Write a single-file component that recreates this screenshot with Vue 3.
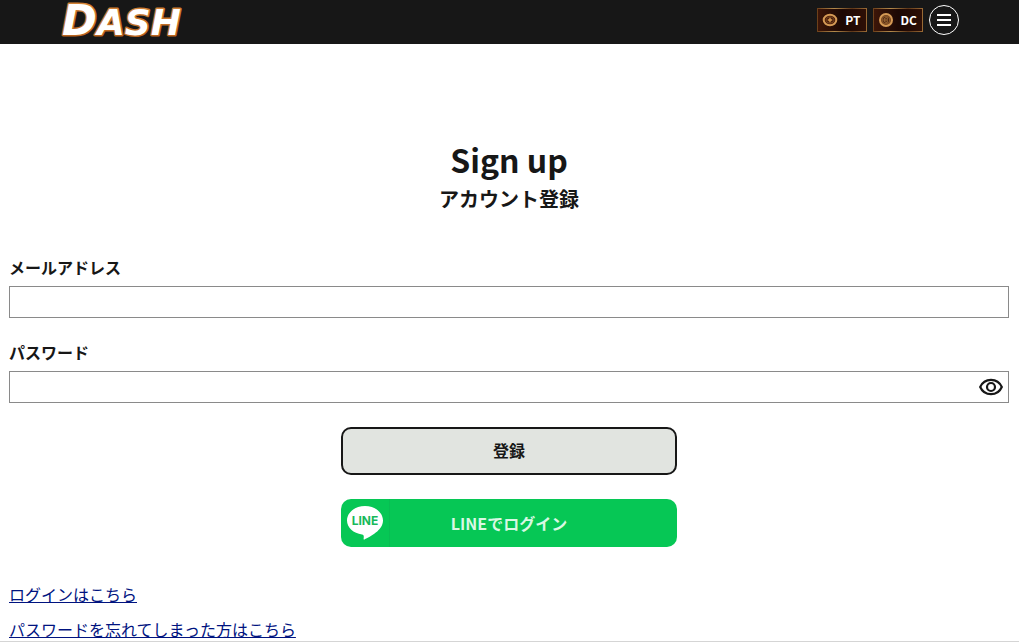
<script setup>
import { ref } from 'vue'

const email = ref('')
const password = ref('')
const visible = ref(false)
const balances = [
  { label: 'PT', glyph: 'star' },
  { label: 'DC', glyph: 'coin' },
]
</script>

<template>
  <div class="page">
    <header class="bar">
      <a class="logo" href="#" aria-label="Dash">
        <svg width="136" height="40" viewBox="0 0 136 40">
          <defs>
            <linearGradient id="edge" x1="0" y1="0" x2="0" y2="1">
              <stop offset="0" stop-color="#d88a3c" />
              <stop offset="1" stop-color="#b35c18" />
            </linearGradient>
          </defs>
          <text class="word" x="4" y="35"><tspan class="cap">D</tspan><tspan class="rest">ASH</tspan></text>
        </svg>
      </a>
      <nav class="tools">
        <a v-for="b in balances" :key="b.label" class="chip" href="#">
          <svg width="16" height="16" viewBox="0 0 16 16" aria-hidden="true">
            <template v-if="b.glyph === 'star'">
              <ellipse cx="8" cy="8" rx="6.3" ry="5.3" fill="#4a1e0c" stroke="#d59a55" stroke-width="2" />
              <ellipse cx="8" cy="8" rx="4" ry="3.2" fill="none" stroke="#75401c" />
              <path d="M8 5.800v4.400M5.800 8h4.400" stroke="#d89b50" stroke-width="1.4" />
            </template>
            <template v-else>
              <circle cx="8" cy="8" r="6" fill="#74431f" stroke="#d59a55" stroke-width="2" />
              <circle cx="8" cy="8" r="3.8" fill="#482411" stroke="#8f5a2a" />
              <path d="M10 6.300C8.500 5 6 6 6 8s2.500 3 4 1.700M7 8h3" fill="none" stroke="#b77b3c" stroke-width="1" />
            </template>
          </svg>
          <span>{{ b.label }}</span>
        </a>
        <button class="menu" type="button" aria-label="メニュー">
          <svg width="14" height="12" viewBox="0 0 14 12" aria-hidden="true">
            <path d="M0 1h14M0 6h14M0 11h14" stroke="#fff" stroke-width="2" />
          </svg>
        </button>
      </nav>
    </header>

    <main class="content">
      <h1 class="title">Sign up</h1>
      <p class="subtitle">アカウント登録</p>

      <form class="form" @submit.prevent>
        <div class="fields">
          <div class="field">
            <label for="email">メールアドレス</label>
            <div class="box"><input id="email" v-model="email" type="email" /></div>
          </div>
          <div class="field">
            <label for="password">パスワード</label>
            <div class="box">
              <input id="password" v-model="password" :type="visible ? 'text' : 'password'" />
              <button class="eye" type="button" aria-label="パスワードを表示" @click="visible = !visible">
                <svg width="24" height="18" viewBox="0 0 24 18" aria-hidden="true">
                  <path d="M1.200 9C3.200 4.400 7.200 1.800 12 1.800S20.800 4.400 22.800 9C20.800 13.600 16.800 16.200 12 16.200S3.200 13.600 1.200 9Z" fill="none" stroke="#171717" stroke-width="2.200" />
                  <circle cx="12" cy="9" r="4" fill="none" stroke="#171717" stroke-width="2.200" />
                </svg>
              </button>
            </div>
          </div>
        </div>
        <button class="action submit" type="submit">登録</button>
        <button class="action line" type="button">
          <span class="mark">
            <svg width="38" height="36" viewBox="0 0 38 36" aria-hidden="true">
              <path d="M19 1C9 1 1 7.500 1 15.500c0 7 6.500 12.800 15 14 1.800.3 2 1.200 1.600 4.200-.1.800.3 1.100 1 .7C24 31.500 37 25.500 37 15.500 37 7.500 29 1 19 1Z" fill="#fff" />
              <text class="brand" x="19" y="20" text-anchor="middle">LINE</text>
            </svg>
          </span>
          <span class="caption">LINEでログイン</span>
        </button>
      </form>

      <ul class="links">
        <li><a href="#">ログインはこちら</a></li>
        <li><a href="#">パスワードを忘れてしまった方はこちら</a></li>
      </ul>
    </main>
    <footer class="foot"></footer>
  </div>
</template>

<style>
body {
  margin: 0;
  background: #fff;
}
</style>

<style scoped>
.page {
  color: #171717;
  font-family: "Noto Sans CJK JP", sans-serif;
  font-size: 16px;
  line-height: 24px;
}
.bar {
  box-sizing: border-box;
  display: flex;
  align-items: center;
  justify-content: space-between;
  height: 44px;
  padding: 0 60px 4px 58px;
  background: #171717;
}
.logo svg {
  display: block;
  overflow: visible;
}
.word {
  font-family: "DejaVu Sans", sans-serif;
  font-weight: 700;
  font-style: italic;
  fill: #fff;
  stroke: url(#edge);
  stroke-width: 3px;
  paint-order: stroke;
  stroke-linejoin: round;
}
.cap {
  font-size: 42px;
}
.rest {
  font-size: 36px;
}
.tools {
  display: flex;
  align-items: center;
  gap: 6px;
}
.chip {
  box-sizing: border-box;
  display: flex;
  align-items: center;
  gap: 7px;
  height: 24px;
  padding: 0 5px 0 4px;
  border: 1px solid #6d4520;
  border-image: linear-gradient(90deg, #6b3e19, #b28a4c 35%, #5d3618 70%, #9a6b35) 1;
  background: linear-gradient(90deg, #3d1608, #1c0804 50%, #2d0f06);
  color: #fff;
  font-size: 12px;
  font-weight: 700;
  text-decoration: none;
}
.menu {
  display: grid;
  place-items: center;
  width: 30px;
  height: 30px;
  padding: 0;
  border: 1px solid #fff;
  border-radius: 50%;
  background: none;
}
.content {
  padding: 92px 10px 0 9px;
}
.title {
  margin: 0 0 2px;
  font-size: 32px;
  line-height: 46px;
  font-weight: 700;
  text-align: center;
}
.subtitle {
  margin: 0;
  font-size: 20px;
  line-height: 30px;
  font-weight: 700;
  text-align: center;
}
.form {
  display: flex;
  flex-direction: column;
  align-items: center;
  gap: 24px;
  padding-top: 41px;
}
.fields {
  display: flex;
  flex-direction: column;
  gap: 22px;
  width: 100%;
}
.field {
  display: flex;
  flex-direction: column;
  gap: 7px;
}
.field label {
  align-self: flex-start;
  font-weight: 700;
}
.box {
  box-sizing: border-box;
  display: flex;
  align-items: center;
  height: 32px;
  border: 1px solid #8a8a8a;
}
.box input {
  flex: 1;
  min-width: 0;
  height: 100%;
  box-sizing: border-box;
  padding: 0 8px;
  border: 0;
  outline: 0;
  background: none;
  font: inherit;
}
.eye {
  display: flex;
  padding: 0 5px;
  border: 0;
  background: none;
}
.action {
  box-sizing: border-box;
  width: 336px;
  max-width: 100%;
  height: 48px;
  border-radius: 10px;
  padding: 0;
  font: inherit;
  font-weight: 700;
}
.submit {
  padding-bottom: 2px;
  border: 2px solid #171717;
  background: #e1e4e0;
  color: #171717;
}
.line {
  display: flex;
  align-items: center;
  border: 0;
  overflow: hidden;
  background: #06c755;
  color: #d9f8e4;
}
.mark {
  box-sizing: border-box;
  display: flex;
  align-items: center;
  height: 100%;
  width: 49px;
  padding-left: 5px;
  border-right: 1px solid #08bd53;
}
.brand {
  font-family: Inter, sans-serif;
  font-size: 12px;
  font-weight: 700;
  fill: #18b95b;
}
.caption {
  flex: 1;
  padding-right: 49px;
  font-size: 16px;
  font-weight: 700;
}
.links {
  display: flex;
  flex-direction: column;
  gap: 11px;
  margin: 0;
  padding: 35px 0 0;
  list-style: none;
}
.links a {
  color: #00137f;
}
.foot {
  border-top: 1px solid #d5d5d5;
}
</style>
